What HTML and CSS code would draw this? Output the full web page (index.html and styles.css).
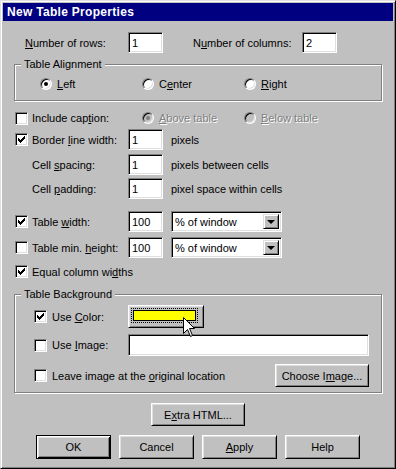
FILE: index.html
```html
<!DOCTYPE html>
<html>
<head>
	<title>New Table Properties</title>
	<link rel="stylesheet" href="styles.css">
</head>
<body>

	<div class = "window">
		<div class = "titleBar">New Table Properties</div>

		<div class = "dialog">
			<div class = "row countRow">
				<span class = "rowsLabel"><u>N</u>umber of rows:</span>
				<span class = "field countField">1</span>
				<span class = "colsLabel">N<u>u</u>mber of columns:</span>
				<span class = "field countField">2</span>
			</div>

			<div class = "group alignGroup">
				<span class = "legend">Table Alignment</span>
				<div class = "row radioRow">
					<span class = "option"><span class = "radio checked"></span><u>L</u>eft</span>
					<span class = "option"><span class = "radio"></span>C<u>e</u>nter</span>
					<span class = "option"><span class = "radio"></span><u>R</u>ight</span>
				</div>
			</div>

			<div class = "row checkRow captionRow">
				<span class = "check"></span>
				<span class = "checkLabel">Include cap<u>t</u>ion:</span>
				<span class = "option disabled firstOption"><span class = "radio checked"></span><u>A</u>bove table</span>
				<span class = "option disabled"><span class = "radio"></span><u>B</u>elow table</span>
			</div>

			<div class = "row checkRow borderRow">
				<span class = "check"><svg width = "9" height = "9" viewBox = "0 0 9 9"><path d = "M7 1h1v1h-1zM6 2h2v1h-2zM1 3h1v1h-1zM5 3h3v1h-3zM1 4h2v1h-2zM4 4h3v1h-3zM1 5h5v1h-5zM2 6h3v1h-3zM3 7h1v1h-1z"/></svg></span>
				<span class = "checkLabel">Border <u>l</u>ine width:</span>
				<span class = "field countField">1</span>
				<span class = "unit">pixels</span>
			</div>

			<div class = "row plainRow spacingRow">
				<span class = "checkLabel">Cell <u>s</u>pacing:</span>
				<span class = "field countField">1</span>
				<span class = "unit">pixels between cells</span>
			</div>

			<div class = "row plainRow paddingRow">
				<span class = "checkLabel">Cell <u>p</u>adding:</span>
				<span class = "field countField">1</span>
				<span class = "unit">pixel space within cells</span>
			</div>

			<div class = "row checkRow widthRow">
				<span class = "check"><svg width = "9" height = "9" viewBox = "0 0 9 9"><path d = "M7 1h1v1h-1zM6 2h2v1h-2zM1 3h1v1h-1zM5 3h3v1h-3zM1 4h2v1h-2zM4 4h3v1h-3zM1 5h5v1h-5zM2 6h3v1h-3zM3 7h1v1h-1z"/></svg></span>
				<span class = "checkLabel">Table <u>w</u>idth:</span>
				<span class = "field countField">100</span>
				<span class = "field select">% of window<span class = "dropButton"><span class = "arrow"></span></span></span>
			</div>

			<div class = "row checkRow heightRow">
				<span class = "check"></span>
				<span class = "checkLabel">Table min. <u>h</u>eight:</span>
				<span class = "field countField">100</span>
				<span class = "field select">% of window<span class = "dropButton"><span class = "arrow"></span></span></span>
			</div>

			<div class = "row checkRow equalRow">
				<span class = "check"><svg width = "9" height = "9" viewBox = "0 0 9 9"><path d = "M7 1h1v1h-1zM6 2h2v1h-2zM1 3h1v1h-1zM5 3h3v1h-3zM1 4h2v1h-2zM4 4h3v1h-3zM1 5h5v1h-5zM2 6h3v1h-3zM3 7h1v1h-1z"/></svg></span>
				<span>Equal column wi<u>d</u>ths</span>
			</div>

			<div class = "group backgroundGroup">
				<span class = "legend">Table Background</span>
				<div class = "row bgRow colorRow">
					<span class = "check"><svg width = "9" height = "9" viewBox = "0 0 9 9"><path d = "M7 1h1v1h-1zM6 2h2v1h-2zM1 3h1v1h-1zM5 3h3v1h-3zM1 4h2v1h-2zM4 4h3v1h-3zM1 5h5v1h-5zM2 6h3v1h-3zM3 7h1v1h-1z"/></svg></span>
					<span class = "bgLabel">Use <u>C</u>olor:</span>
					<span class = "button colorButton"><span class = "focusRect"><span class = "swatch"></span></span></span>
				</div>
				<div class = "row bgRow imageRow">
					<span class = "check"></span>
					<span class = "bgLabel">Use <u>I</u>mage:</span>
					<span class = "field imageField"></span>
				</div>
				<div class = "row bgRow leaveRow">
					<span class = "check"></span>
					<span>Leave image at the <u>o</u>riginal location</span>
					<span class = "button chooseButton">Choose I<u>m</u>age...</span>
				</div>
			</div>

			<div class = "row extraRow">
				<span class = "button extraButton">E<u>x</u>tra HTML...</span>
			</div>

			<div class = "row buttonRow">
				<span class = "button dialogButton defaultButton">OK</span>
				<span class = "button dialogButton">Cancel</span>
				<span class = "button dialogButton"><u>A</u>pply</span>
				<span class = "button dialogButton">Help</span>
			</div>
		</div>

		<svg class = "cursor" width = "12" height = "20" viewBox = "0 0 12 20"><path d = "M0.5 0.5V16.5L4.5 12.5L7.5 19.5L9.5 18.5L6.5 11.5H11.5Z" fill = "#fff" stroke = "#000" stroke-width = "1"/></svg>
	</div>

</body>
</html>
```

FILE: styles.css
```css
body {
	margin : 0;
	background : #c0c0c0;
}
.window {
	position : relative;
	width : 396px;
	height : 469px;
	box-sizing : border-box;
	padding : 2px;
	border : 1px solid;
	border-color : #dfdfdf #000 #000 #dfdfdf;
	box-shadow : inset 1px 1px #fff, inset -1px -1px #808080;
	background : #c0c0c0;
	font-family : "Liberation Sans", Arial, sans-serif;
	font-size : 11px;
	color : #000;
}
.titleBar {
	height : 18px;
	line-height : 18px;
	padding-left : 4px;
	background : #000080;
	color : #fff;
	font-size : 12px;
	font-weight : bold;
	letter-spacing : 0.3px;
}
.dialog {
	padding : 0 11px;
}
u {
	text-underline-offset : 1px;
}
.row {
	display : flex;
	align-items : center;
	height : 21px;
}

/* sunken and raised bevels */
.field, .check {
	box-sizing : border-box;
	border : 1px solid;
	border-color : #808080 #fff #fff #808080;
	box-shadow : inset 1px 1px #000, inset -1px -1px #dfdfdf;
	background : #fff;
}
.field {
	display : flex;
	align-items : center;
	height : 21px;
	padding : 0 3px;
}
.button {
	box-sizing : border-box;
	display : flex;
	align-items : center;
	justify-content : center;
	height : 23px;
	border : 1px solid;
	border-color : #fff #000 #000 #fff;
	box-shadow : inset 1px 1px #dfdfdf, inset -1px -1px #808080;
	background : #c0c0c0;
}
.check {
	display : flex;
	width : 13px;
	height : 13px;
	padding : 1px;
	flex-shrink : 0;
}
.radio {
	position : relative;
	box-sizing : border-box;
	width : 12px;
	height : 12px;
	margin-right : 5px;
	border-radius : 50%;
	border : 1px solid;
	border-color : #808080 #fff #fff #808080;
	box-shadow : inset 1px 1px #000, inset -1px -1px #dfdfdf;
	background : #fff;
	flex-shrink : 0;
}
.radio.checked::after {
	content : "";
	position : absolute;
	left : 3px;
	top : 3px;
	width : 4px;
	height : 4px;
	border-radius : 50%;
	background : #000;
}
.option {
	display : flex;
	align-items : center;
	width : 102px;
}
.disabled {
	color : #808080;
	text-shadow : 1px 1px #fff;
}
.disabled .radio {
	background : #c0c0c0;
}
.disabled .radio.checked::after {
	background : #808080;
}

/* group boxes */
.group {
	position : relative;
	border : 1px solid #808080;
	box-shadow : inset 1px 1px #fff, 1px 1px #fff;
}
.legend {
	position : absolute;
	top : -7px;
	left : 6px;
	padding : 0 3px;
	line-height : 13px;
	background : #c0c0c0;
}

/* first block */
.countRow {
	margin-top : 11px;
	padding-left : 11px;
}
.rowsLabel {
	width : 103px;
}
.countField {
	width : 35px;
}
.colsLabel {
	width : 109px;
	margin-left : 30px;
}
.alignGroup {
	margin-top : 11px;
	height : 37px;
	box-sizing : border-box;
	padding-top : 9px;
}
.radioRow {
	height : 20px;
	padding-left : 25px;
}

/* check rows */
.checkRow {
	padding-left : 1px;
}
.checkRow .check {
	margin-right : 4px;
}
.plainRow {
	padding-left : 18px;
}
.checkLabel {
	width : 96px;
}
.firstOption {
	margin-left : 14px;
}
.unit {
	margin-left : 8px;
}
.captionRow {
	margin-top : 7px;
	height : 20px;
}
.borderRow {
	margin-top : 1px;
}
.spacingRow {
	margin-top : 4px;
}
.paddingRow {
	margin-top : 3px;
}
.widthRow {
	margin-top : 12px;
}
.heightRow {
	margin-top : 5px;
}
.equalRow {
	margin-top : 3px;
}
.select {
	position : relative;
	width : 111px;
	margin-left : 8px;
}
.dropButton {
	position : absolute;
	top : 2px;
	right : 2px;
	box-sizing : border-box;
	width : 16px;
	height : 15px;
	display : flex;
	align-items : center;
	justify-content : center;
	border : 1px solid;
	border-color : #dfdfdf #000 #000 #dfdfdf;
	box-shadow : inset 1px 1px #fff, inset -1px -1px #808080;
	background : #c0c0c0;
}
.arrow {
	width : 0;
	height : 0;
	border-left : 4px solid transparent;
	border-right : 4px solid transparent;
	border-top : 4px solid #000;
}

/* table background group */
.backgroundGroup {
	margin-top : 12px;
	height : 99px;
	box-sizing : border-box;
	padding : 10px 12px 0 19px;
}
.bgRow {
	height : 23px;
}
.bgRow .check {
	margin-right : 5px;
}
.bgLabel {
	width : 76px;
}
.colorButton {
	width : 76px;
	padding : 2px 5px 4px 2px;
}
.focusRect {
	flex : 1;
	height : 100%;
	box-sizing : border-box;
	border : 1px dotted #000;
	padding : 1px;
	display : flex;
}
.swatch {
	flex : 1;
	border : 1px solid #000;
	background : #ffff00;
}
.imageRow {
	margin-top : 6px;
	height : 22px;
}
.imageField {
	width : 242px;
	height : 22px;
}
.leaveRow {
	margin-top : 8px;
}
.chooseButton {
	width : 94px;
	margin-left : auto;
}

/* bottom buttons */
.extraRow {
	justify-content : center;
	margin-top : 10px;
	height : 23px;
}
.extraButton {
	width : 94px;
}
.buttonRow {
	justify-content : center;
	gap : 8px;
	margin-top : 9px;
	height : 24px;
}
.dialogButton {
	width : 75px;
	height : 24px;
}
.defaultButton {
	border-color : #000;
	box-shadow : inset 1px 1px #fff, inset -1px -1px #000, inset 2px 2px #dfdfdf, inset -2px -2px #808080;
}
.cursor {
	position : absolute;
	left : 182px;
	top : 316px;
}
```
